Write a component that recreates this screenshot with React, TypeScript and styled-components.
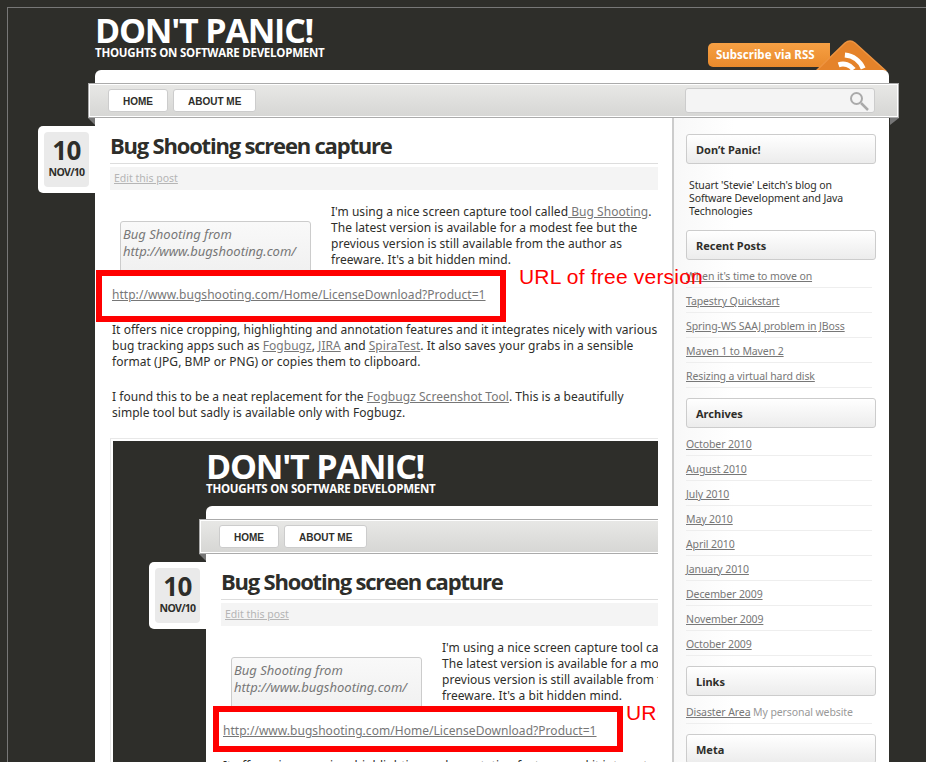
import React from 'react';
import styled, { createGlobalStyle } from 'styled-components';

const BODY_FONT = '"Noto Sans", "Liberation Sans", sans-serif';

const GlobalStyle = createGlobalStyle`
  html, body { margin: 0; padding: 0; background: #2e2e2a; }
  body { font-family: ${BODY_FONT}; font-size: 12px; color: #2e2e2a; }
`;

const Viewport = styled.div`
  height: 762px;
  width: 926px;
  overflow: hidden;
  background: #2e2e2a;
`;

const Frame = styled.div`
  margin: 7px 0 0 7px;
  padding-left: 87px;
  border-top: 1px solid #777;
  border-left: 1px solid #777;
`;

const Column = styled.div`
  width: 794px;
  flex: none;
`;

const Masthead = styled.header<{ $nested?: boolean }>`
  display: flex;
  justify-content: space-between;
  height: ${(p) => (p.$nested ? 65 : 62)}px;
`;

const Brand = styled.div<{ $nested?: boolean }>`
  padding-top: ${(p) => (p.$nested ? 8 : 5)}px;
  color: #fff;
  font-family: "Open Sans", sans-serif;
  font-weight: 700;
`;

const BrandName = styled.div`
  font-size: 34px;
  line-height: 34px;
  letter-spacing: -1.2px;
`;

const BrandTag = styled.div`
  font-size: 11.5px;
  line-height: 12px;
  letter-spacing: -0.25px;
`;

const RssBadge = styled.div`
  align-self: flex-end;
  position: relative;
  width: 122px;
  height: 24px;
  margin: 0 59px 3px 0;
  box-sizing: border-box;
  padding-left: 8px;
  background: linear-gradient(#f6a044, #e98a2c);
  border-radius: 5px 0 0 5px;
  color: #fff;
  font-size: 11.5px;
  font-weight: 700;
  line-height: 24px;
  white-space: nowrap;
`;

const RssCorner = styled.svg`
  position: absolute;
  left: 107px;
  top: -4px;
  width: 72px;
  height: 32px;
`;

const Panel = styled.div`
  position: relative;
  z-index: 1;
  background: #fff;
  border-radius: 6px 6px 0 0;
  padding-top: 13px;
`;

const NavBar = styled.nav`
  position: relative;
  display: flex;
  justify-content: space-between;
  align-items: center;
  height: 35px;
  box-sizing: border-box;
  margin: 0 -10px 0 -7px;
  padding: 0 23px 0 19px;
  background: linear-gradient(#e8e8e6, #d6d6d4);
  border: 1px solid #ababab;
  box-shadow: inset 0 0 0 1px #fff;

  &::before,
  &::after {
    content: '';
    position: absolute;
    top: 34px;
    border-top: 7px solid #777;
  }
  &::before {
    left: -1px;
    border-left: 7px solid transparent;
  }
  &::after {
    right: -1px;
    border-right: 9px solid transparent;
  }
`;

const NavLinks = styled.div`
  display: flex;
  gap: 5px;
`;

const NavLink = styled.a`
  height: 23px;
  box-sizing: border-box;
  padding: 0 14px;
  background: #fff;
  border: 1px solid #ccc;
  border-radius: 3px;
  color: #2e2e2a;
  font-family: "Liberation Sans", sans-serif;
  font-size: 10px;
  font-weight: 700;
  line-height: 23px;
`;

const SearchBox = styled.div`
  display: flex;
  justify-content: flex-end;
  align-items: center;
  width: 190px;
  height: 25px;
  box-sizing: border-box;
  padding-right: 5px;
  background: #f4f4f4;
  border: 1px solid #ccc;
  border-radius: 3px;
`;

const Columns = styled.div`
  display: flex;
`;

const Main = styled.main`
  position: relative;
  width: 548px;
  flex: none;
  padding: 9px 14px 0 15px;
`;

const DateTab = styled.div`
  position: absolute;
  left: -57px;
  top: 8px;
  width: 45px;
  height: 55px;
  padding: 6px;
  background: #fff;
  border-radius: 5px 0 0 5px;
`;

const DateInner = styled.div`
  height: 55px;
  background: #eaeaea;
  border-radius: 4px;
  text-align: center;
  font-family: "Open Sans", sans-serif;
  font-weight: 700;
`;

const DateDay = styled.div`
  padding-top: 3px;
  font-size: 26px;
  line-height: 31px;
  letter-spacing: -0.5px;
`;

const DateMonth = styled.div`
  font-size: 10.5px;
  line-height: 12px;
  letter-spacing: -0.7px;
`;

const Title = styled.h1`
  margin: 0;
  height: 37px;
  box-sizing: border-box;
  border-bottom: 1px solid #ddd;
  font-family: "Open Sans", sans-serif;
  font-size: 22px;
  font-weight: 700;
  line-height: 36px;
  letter-spacing: -1.2px;
`;

const EditBar = styled.div`
  margin-top: 3px;
  height: 23px;
  padding-left: 4px;
  background: #f4f4f4;
  color: #b5b5b5;
  font-size: 10.5px;
  line-height: 23px;
  text-decoration: underline;
`;

const Intro = styled.div`
  display: flex;
  margin-top: 14px;
  height: 73px;
`;

const ImagePlaceholder = styled.div`
  width: 187px;
  height: 49px;
  flex: none;
  margin: 17px 20px 0 10px;
  padding: 4px 0 0 2px;
  background: linear-gradient(#f9f9f9, #f0f0f0);
  border: 1px solid #ccc;
  border-radius: 3px;
  color: #777;
  font-size: 13px;
  font-style: italic;
  line-height: 17px;
  white-space: nowrap;
`;

const Paragraph = styled.p`
  margin: 0;
  font-size: 12px;
  line-height: 16px;
  letter-spacing: 0.04px;
  white-space: nowrap;
`;

const Spaced = styled(Paragraph)<{ $top: number }>`
  margin: ${(p) => p.$top}px 0 0 2px;
`;

const UrlLine = styled(Spaced)`
  position: relative;
  z-index: 2;
`;

const TextLink = styled.a`
  color: #777;
  text-decoration: underline;
`;

const RedBox = styled.div<{ $left: number; $height: number }>`
  position: absolute;
  left: ${(p) => p.$left}px;
  top: -17px;
  width: 398px;
  height: ${(p) => p.$height}px;
  border: 6px solid #ff0000;
`;

const RedNote = styled.div<{ $left: number }>`
  position: absolute;
  left: ${(p) => p.$left}px;
  top: -22px;
  color: #ff0000;
  font-family: "Liberation Sans", sans-serif;
  font-size: 21px;
  line-height: 24px;
  letter-spacing: 0.2px;
`;

const Shot = styled.div`
  margin-top: 17px;
  height: 400px;
  padding: 2px 0 0 2px;
  border: 1px solid #e8e8e8;
  border-right: 0;
  overflow: hidden;
`;

const ShotCanvas = styled.div`
  display: flex;
  height: 400px;
  padding-left: 93px;
  background: #2e2e2a;
`;

const Sidebar = styled.aside`
  width: 217px;
  flex: none;
  box-sizing: border-box;
  padding: 16px 13px 0 12px;
  border-left: 2px solid #ccc;
  background: linear-gradient(90deg, #f8f8f8, #fff 60px);
`;

const WidgetTitle = styled.h3`
  margin: 0;
  height: 30px;
  box-sizing: border-box;
  padding-left: 9px;
  background: linear-gradient(#fff, #ececec);
  border: 1px solid #ccc;
  border-radius: 3px;
  font-size: 11px;
  font-weight: 700;
  line-height: 30px;
`;

const WidgetText = styled.p`
  margin: 15px 0 12px 3px;
  font-size: 10.5px;
  line-height: 13px;
  letter-spacing: -0.1px;
  white-space: nowrap;
`;

const LinkList = styled.ul`
  list-style: none;
  margin: 3px 0 10px;
  padding: 0;
  width: 186px;
`;

const LinkItem = styled.li`
  height: 25px;
  box-sizing: border-box;
  border-bottom: 1px solid #eee;
  color: #999;
  font-size: 10.5px;
  line-height: 26px;
  letter-spacing: -0.1px;
  white-space: nowrap;
`;

const RECENT = [
  "When it's time to move on",
  'Tapestry Quickstart',
  'Spring-WS SAAJ problem in JBoss',
  'Maven 1 to Maven 2',
  'Resizing a virtual hard disk',
];

const ARCHIVES = [
  'October 2010',
  'August 2010',
  'July 2010',
  'May 2010',
  'April 2010',
  'January 2010',
  'December 2009',
  'November 2009',
  'October 2009',
];

const SearchIcon = () => (
  <svg width="20" height="20" viewBox="0 0 20 20" fill="none" stroke="#aaa">
    <circle cx="7.5" cy="7.5" r="5.5" strokeWidth="2" />
    <path d="M12 12l7 7" strokeWidth="2.5" />
  </svg>
);

const RssArt = () => (
  <RssCorner viewBox="0 0 72 32">
    <path d="M1 32L30 4Q35 0 40 4L71 32Z" fill="#e5832a" stroke="#ee9440" strokeWidth="1.5" />
    <g fill="none" stroke="#fff" strokeWidth="5">
      <path d="M23.6 25.8A13 13 0 0 1 38.6 30.5" />
      <path d="M29.9 16.1A22 22 0 0 1 48.2 29.4" />
    </g>
  </RssCorner>
);

const BlogSidebar = () => (
  <Sidebar>
    <WidgetTitle>Don’t Panic!</WidgetTitle>
    <WidgetText>
      Stuart 'Stevie' Leitch's blog on
      <br />
      Software Development and Java
      <br />
      Technologies
    </WidgetText>
    <WidgetTitle>Recent Posts</WidgetTitle>
    <LinkList>
      {RECENT.map((item) => (
        <LinkItem key={item}>
          <TextLink>{item}</TextLink>
        </LinkItem>
      ))}
    </LinkList>
    <WidgetTitle>Archives</WidgetTitle>
    <LinkList>
      {ARCHIVES.map((item, i) => (
        <LinkItem key={i}>
          <TextLink>{item}</TextLink>
        </LinkItem>
      ))}
    </LinkList>
    <WidgetTitle>Links</WidgetTitle>
    <LinkList>
      <LinkItem>
        <TextLink>Disaster Area</TextLink> My personal website
      </LinkItem>
    </LinkList>
    <WidgetTitle>Meta</WidgetTitle>
  </Sidebar>
);

const Blog = ({ nested }: { nested?: boolean }) => (
  <Column>
    <Masthead $nested={nested}>
      <Brand $nested={nested}>
        <BrandName>DON'T PANIC!</BrandName>
        <BrandTag>THOUGHTS ON SOFTWARE DEVELOPMENT</BrandTag>
      </Brand>
      <RssBadge>
        Subscribe via RSS
        <RssArt />
      </RssBadge>
    </Masthead>
    <Panel>
      <NavBar>
        <NavLinks>
          <NavLink>HOME</NavLink>
          <NavLink>ABOUT ME</NavLink>
        </NavLinks>
        <SearchBox>
          <SearchIcon />
        </SearchBox>
      </NavBar>
      <Columns>
        <Main>
          <DateTab>
            <DateInner>
              <DateDay>10</DateDay>
              <DateMonth>NOV/10</DateMonth>
            </DateInner>
          </DateTab>
          <Title>Bug Shooting screen capture</Title>
          <EditBar>Edit this post</EditBar>
          <Intro>
            <ImagePlaceholder>
              Bug Shooting from
              <br />
              http://www.bugshooting.com/
            </ImagePlaceholder>
            <Paragraph>
              I'm using a nice screen capture tool called<TextLink> Bug Shooting</TextLink>.
              <br />
              The latest version is available for a modest fee but the
              <br />
              previous version is still available from the author as
              <br />
              freeware. It's a bit hidden mind.
            </Paragraph>
          </Intro>
          <UrlLine $top={10}>
            <TextLink>http://www.bugshooting.com/Home/LicenseDownload?Product=1</TextLink>
            <RedBox $left={nested ? -10 : -16} $height={nested ? 34 : 40} />
            <RedNote $left={nested ? 403 : 407}>URL of free version</RedNote>
          </UrlLine>
          <Spaced $top={19}>
            It offers nice cropping, highlighting and annotation features and it integrates nicely with various
            <br />
            bug tracking apps such as <TextLink>Fogbugz</TextLink>, <TextLink>JIRA</TextLink> and{' '}
            <TextLink>SpiraTest</TextLink>. It also saves your grabs in a sensible
            <br />
            format (JPG, BMP or PNG) or copies them to clipboard.
          </Spaced>
          <Spaced $top={19}>
            I found this to be a neat replacement for the <TextLink>Fogbugz Screenshot Tool</TextLink>. This is a
            beautifully
            <br />
            simple tool but sadly is available only with Fogbugz.
          </Spaced>
          {!nested && (
            <Shot>
              <ShotCanvas>
                <Blog nested />
              </ShotCanvas>
            </Shot>
          )}
        </Main>
        {!nested && <BlogSidebar />}
      </Columns>
    </Panel>
  </Column>
);

const App = () => (
  <Viewport>
    <GlobalStyle />
    <Frame>
      <Blog />
    </Frame>
  </Viewport>
);

export default App;
